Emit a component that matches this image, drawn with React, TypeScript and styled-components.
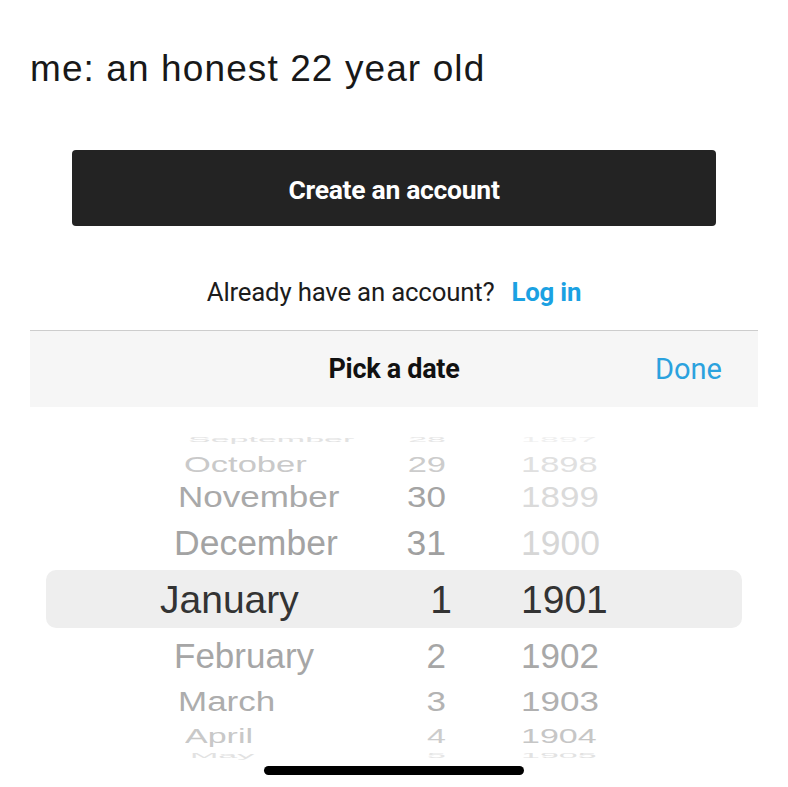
import styled, { createGlobalStyle } from "styled-components";

const GlobalStyle = createGlobalStyle`
    html, body {
        margin: 0;
        padding: 0;
        background: #ffffff;
    }
`

const Page = styled.main`
    width: 788px;
    min-height: 787px;
    display: flex;
    flex-direction: column;
    background: #ffffff;
`

const Caption = styled.h1`
    margin: 49px 0 0 0;
    padding: 0 30px;
    font-family: "Liberation Sans", Arial, sans-serif;
    font-weight: 400;
    font-size: 37px;
    line-height: 40px;
    letter-spacing: 1.1px;
    color: #181818;
`

const CreateButton = styled.button`
    margin: 61px 72px 0 72px;
    height: 76px;
    padding: 2px 0 0 0;
    border: none;
    border-radius: 4px;
    background: #232323;
    color: #ffffff;
    font-family: Roboto, "Liberation Sans", sans-serif;
    font-weight: 700;
    font-size: 26.5px;
    letter-spacing: -0.3px;
    cursor: pointer;
`

const LoginLine = styled.p`
    margin: 51px 0 0 0;
    display: flex;
    justify-content: center;
    align-items: center;
    gap: 17px;
    height: 30px;
    font-family: Roboto, "Liberation Sans", sans-serif;
    font-size: 25.8px;
    letter-spacing: -0.2px;
    color: #1c1c1c;
`

const LoginLink = styled.a`
    color: #1ba1e2;
    font-weight: 700;
    text-decoration: none;
`

const Sheet = styled.section`
    margin: 23px 30px 0 30px;
    border-top: 1px solid #cdcdcd;
`

const SheetHeader = styled.header`
    height: 76px;
    display: grid;
    grid-template-columns: 1fr auto 1fr;
    align-items: center;
    background: #f6f6f6;
    padding: 0 36px;
    font-family: Roboto, "Liberation Sans", sans-serif;
`

const SheetTitle = styled.h2`
    grid-column: 2;
    margin: 0;
    font-size: 27px;
    font-weight: 700;
    letter-spacing: -0.3px;
    color: #111111;
`

const DoneButton = styled.button`
    justify-self: end;
    border: none;
    background: none;
    padding: 0;
    font-family: inherit;
    font-size: 29px;
    color: #2ba2de;
`

const Wheel = styled.div`
    padding: 20px 16px 0 16px;
    display: flex;
    flex-direction: column;
    font-family: "Liberation Sans", Arial, sans-serif;
`

const WheelRow = styled.div<{ $h: number; $size: number; $scale: number; $selected?: boolean }>`
    height: ${p => p.$h}px;
    display: grid;
    grid-template-columns: 330px 76px 1fr;
    align-items: center;
    font-size: ${p => p.$size}px;
    line-height: 1;
    border-radius: ${p => (p.$selected ? "10px" : "0")};
    background: ${p => (p.$selected ? "#eeeeee" : "transparent")};
    transform: scaleY(${p => p.$scale});
`

const MonthCell = styled.span<{ $color: string; $indent: number }>`
    padding-left: ${p => p.$indent}px;
    color: ${p => p.$color};
    white-space: nowrap;
`

const DayCell = styled.span<{ $color: string; $selected?: boolean }>`
    text-align: right;
    padding-right: ${p => (p.$selected ? 0 : 6)}px;
    color: ${p => p.$color};
`

const YearCell = styled.span<{ $color: string }>`
    padding-left: 69px;
    color: ${p => p.$color};
`

const HomeBar = styled.div`
    margin: 8px auto 0 auto;
    width: 260px;
    height: 9px;
    border-radius: 5px;
    background: #000000;
`

type Row = {
    month: string;
    day: number;
    year: number;
    h: number;
    size: number;
    scale: number;
    indent: number;
    mc: string;
    dc: string;
    yc: string;
    selected?: boolean;
};

const rows: Row[] = [
    { month: "September", day: 28, year: 1897, h: 22, size: 34, scale: 0.22, indent: 142, mc: "#e2e2e2", dc: "#e6e6e6", yc: "#efefef" },
    { month: "October", day: 29, year: 1898, h: 25, size: 34.5, scale: 0.62, indent: 138, mc: "#c9c9c9", dc: "#cccccc", yc: "#e0e0e0" },
    { month: "November", day: 30, year: 1899, h: 44, size: 35, scale: 0.82, indent: 132, mc: "#a9a9a9", dc: "#a4a4a4", yc: "#dadada" },
    { month: "December", day: 31, year: 1900, h: 52, size: 35.5, scale: 0.98, indent: 128, mc: "#a3a3a3", dc: "#a0a0a0", yc: "#d6d6d6" },
    { month: "January", day: 1, year: 1901, h: 58, size: 39, scale: 1, indent: 114, mc: "#333333", dc: "#333333", yc: "#333333", selected: true },
    { month: "February", day: 2, year: 1902, h: 54, size: 35, scale: 0.98, indent: 128, mc: "#a6a6a6", dc: "#a6a6a6", yc: "#a8a8a8" },
    { month: "March", day: 3, year: 1903, h: 38, size: 35, scale: 0.8, indent: 132, mc: "#adadad", dc: "#b3b3b3", yc: "#b0b0b0" },
    { month: "April", day: 4, year: 1904, h: 28, size: 34, scale: 0.58, indent: 139, mc: "#c8c8c8", dc: "#cccccc", yc: "#c6c6c6" },
    { month: "May", day: 5, year: 1905, h: 10, size: 34, scale: 0.2, indent: 144, mc: "#e2e2e2", dc: "#e6e6e6", yc: "#e2e2e2" },
];

function App() {
    return (
        <Page>
            <GlobalStyle />
            <Caption>me: an honest 22 year old</Caption>

            <CreateButton>Create an account</CreateButton>

            <LoginLine>
                Already have an account?
                <LoginLink href="#">Log in</LoginLink>
            </LoginLine>

            <Sheet>
                <SheetHeader>
                    <SheetTitle>Pick a date</SheetTitle>
                    <DoneButton>Done</DoneButton>
                </SheetHeader>

                <Wheel>
                    {rows.map(r => (
                        <WheelRow key={r.month} $h={r.h} $size={r.size} $scale={r.scale} $selected={r.selected}>
                            <MonthCell $color={r.mc} $indent={r.indent}>{r.month}</MonthCell>
                            <DayCell $color={r.dc} $selected={r.selected}>{r.day}</DayCell>
                            <YearCell $color={r.yc}>{r.year}</YearCell>
                        </WheelRow>
                    ))}
                </Wheel>
            </Sheet>

            <HomeBar />
        </Page>
    )
}

export default App;
